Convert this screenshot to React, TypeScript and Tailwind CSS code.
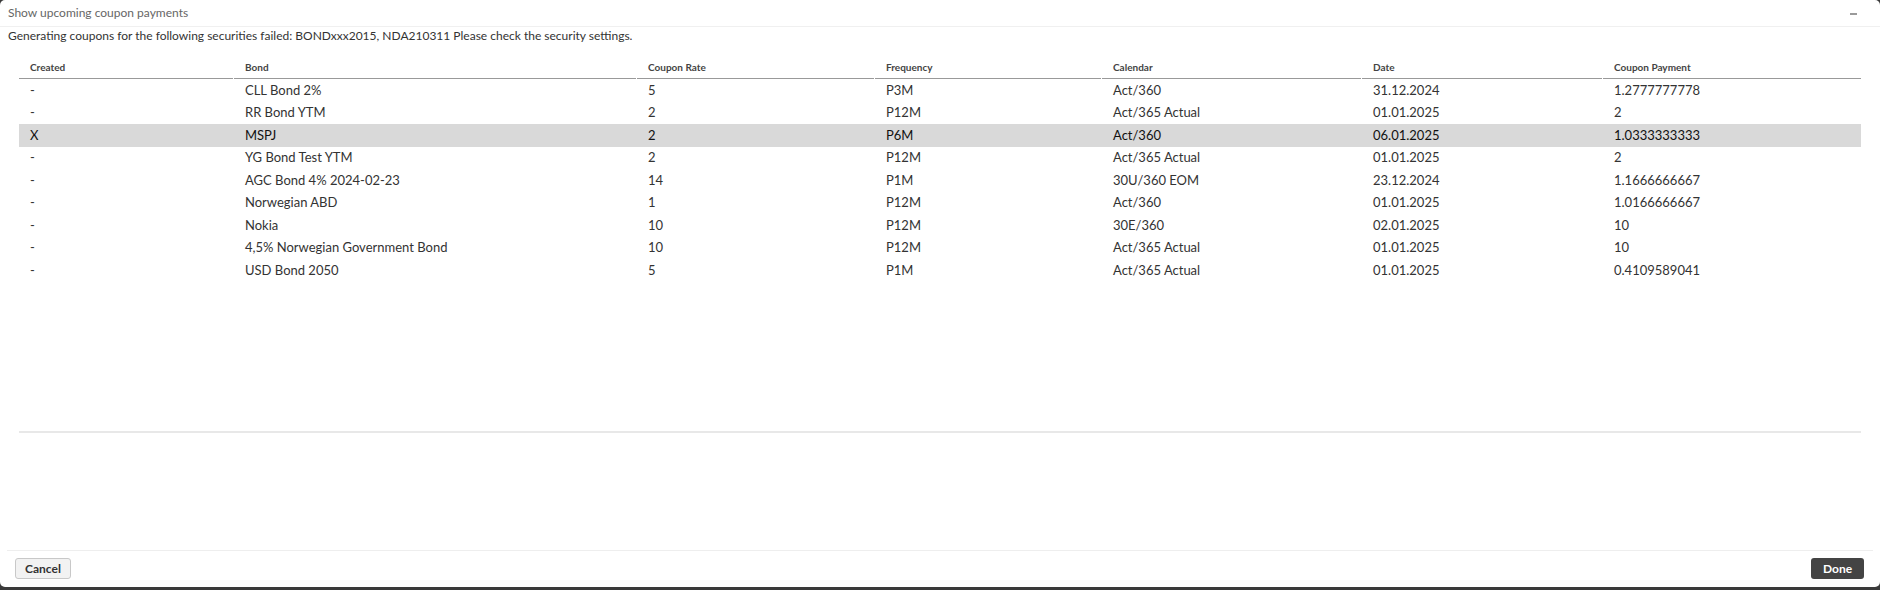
import React from "react";

const cols = ["Created", "Bond", "Coupon Rate", "Frequency", "Calendar", "Date", "Coupon Payment"];

const rows: string[][] = [
  ["-", "CLL Bond 2%", "5", "P3M", "Act/360", "31.12.2024", "1.2777777778"],
  ["-", "RR Bond YTM", "2", "P12M", "Act/365 Actual", "01.01.2025", "2"],
  ["X", "MSPJ", "2", "P6M", "Act/360", "06.01.2025", "1.0333333333"],
  ["-", "YG Bond Test YTM", "2", "P12M", "Act/365 Actual", "01.01.2025", "2"],
  ["-", "AGC Bond 4% 2024-02-23", "14", "P1M", "30U/360 EOM", "23.12.2024", "1.1666666667"],
  ["-", "Norwegian ABD", "1", "P12M", "Act/360", "01.01.2025", "1.0166666667"],
  ["-", "Nokia", "10", "P12M", "30E/360", "02.01.2025", "10"],
  ["-", "4,5% Norwegian Government Bond", "10", "P12M", "Act/365 Actual", "01.01.2025", "10"],
  ["-", "USD Bond 2050", "5", "P1M", "Act/365 Actual", "01.01.2025", "0.4109589041"],
];

const grid = "grid grid-cols-[214px_402px_237px_226px_259px_240px_258px] gap-x-px";

export default function App() {
  return (
    <div
      className="w-[1880px] h-[590px] bg-[#3a3a3a] overflow-hidden"
      style={{ fontFamily: "Lato, 'Open Sans', sans-serif" }}
    >
      <div className="h-[587px] bg-white rounded-[5px] flex flex-col">
        {/* header */}
        <div className="h-[27px] border-b border-[#f0f0f0] flex items-center justify-between pl-[8px] pr-[23px]">
          <span className="text-[12px] text-[#666] leading-[16px]">Show upcoming coupon payments</span>
          <span className="block w-[7px] h-[2px] bg-[#9a9a9a] mt-[2px]" />
        </div>

        {/* message */}
        <div className="h-[18px] leading-[18px] pl-[8px] text-[12px] text-[#333]">
          Generating coupons for the following securities failed: BONDxxx2015, NDA210311 Please check the security settings.
        </div>

        {/* table */}
        <div className="mt-[11px] mx-[19px] h-[377px] border-b-2 border-[#e8e8e8]">
          <div className={grid}>
            {cols.map((c) => (
              <div
                key={c}
                className="h-[23px] border-b border-[#999] pl-[11px] flex items-center text-[10px] font-bold text-[#444]"
              >
                {c}
              </div>
            ))}
          </div>
          {rows.map((r, i) => {
            const sel = r[0] === "X";
            return (
              <div
                key={i}
                className={`${grid} h-[22.5px] ${sel ? "bg-[#d9d9d9] text-[#111]" : "text-[#333]"}`}
              >
                {r.map((v, j) => (
                  <div key={j} className="pl-[11px] flex items-center text-[13px] whitespace-nowrap">
                    {v}
                  </div>
                ))}
              </div>
            );
          })}
        </div>

        {/* footer */}
        <div className="mt-auto mx-[7px] border-t border-[#eeeeee] pt-[7px] pb-[8px] pl-[8px] pr-[9px] flex justify-between">
          <button className="h-[21px] w-[56px] rounded-[3px] border border-[#c8c8c8] bg-[#f2f2f2] text-[12px] font-bold text-[#333] flex items-center justify-center">
            Cancel
          </button>
          <button className="h-[21px] w-[53px] rounded-[3px] bg-[#444] text-[12px] font-bold text-white flex items-center justify-center">
            Done
          </button>
        </div>
      </div>
    </div>
  );
}
